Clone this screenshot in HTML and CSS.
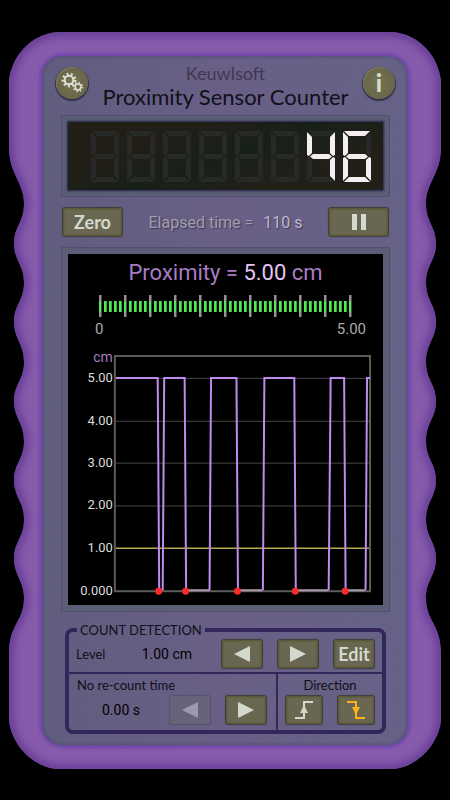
FILE: index.html
```html
<!DOCTYPE html>
<html lang="en">

<head>
  <meta charset="UTF-8">
  <meta name="viewport" content="width=device-width, initial-scale=1.0">
  <title>Proximity Sensor Counter</title>
  <link rel="stylesheet" href="styles.css">
</head>

<body>

  <main class="device">
    <!-- purple rubber case with finger grips -->
    <svg class="case" viewBox="0 0 432 735" preserveAspectRatio="none" aria-hidden="true">
      <defs>
        <path id="caseShape" d="M48 0 H384 C412 3 429 25 432 48 V115 C432 142 417 150 417 171 C417 190 427 194 427 211 C427 228 417 232 417 250 C417 268 427 272 427 289 C427 306 417 311 417 329 C417 347 427 351 427 368 C427 385 417 390 417 408 C417 426 427 430 427 447 C427 464 417 468 417 486 C417 504 427 508 427 525 C427 542 417 547 417 564 C417 588 432 590 432 620 V687 C429 710 410 732 384 735 H48 C22 732 3 710 0 687 V620 C0 590 15 588 15 564 C15 547 5 542 5 525 C5 508 15 504 15 486 C15 468 5 464 5 447 C5 430 15 426 15 408 C15 390 5 385 5 368 C5 351 15 347 15 329 C15 311 5 306 5 289 C5 272 15 268 15 250 C15 232 5 228 5 211 C5 194 15 190 15 171 C15 150 0 142 0 115 V48 C3 25 20 3 48 0 Z"/>
        <clipPath id="caseClip"><use href="#caseShape"/></clipPath>
        <clipPath id="faceClip"><rect x="33" y="24" width="366" height="687" rx="20"/></clipPath>
        <filter id="soft" x="-10%" y="-10%" width="120%" height="120%"><feGaussianBlur stdDeviation="4"/></filter>
        <filter id="softer" x="-10%" y="-10%" width="120%" height="120%"><feGaussianBlur stdDeviation="1.5"/></filter>
        <filter id="grain">
          <feTurbulence type="fractalNoise" baseFrequency="0.5" numOctaves="2" seed="4"/>
          <feColorMatrix values="0 0 0 0 0.1  0 0 0 0 0.1  0 0 0 0 0.15  0.5 0.5 0 0 -0.4"/>
        </filter>
        <linearGradient id="faceFill" x1="0" y1="0" x2="1" y2="0">
          <stop offset="0" stop-color="#625e80"/>
          <stop offset="0.5" stop-color="#6a6088"/>
          <stop offset="1" stop-color="#676388"/>
        </linearGradient>
      </defs>
      <use href="#caseShape" fill="#865bab"/>
      <g clip-path="url(#caseClip)">
        <use href="#caseShape" fill="none" stroke="#5c3090" stroke-width="7" filter="url(#soft)"/>
        <rect x="32" y="23" width="368" height="689" rx="22" fill="none" stroke="#6a40ae" stroke-width="3" filter="url(#softer)"/>
      </g>
      <rect x="33" y="24" width="366" height="687" rx="20" fill="url(#faceFill)"/>
      <g clip-path="url(#faceClip)">
        <rect x="33" y="24" width="366" height="687" filter="url(#grain)" opacity="0.35"/>
        <rect x="33" y="24" width="366" height="687" rx="20" fill="none" stroke="#4c4670" stroke-width="2" filter="url(#softer)"/>
      </g>
    </svg>

    <div class="face">
      <header class="header">
        <button class="round" aria-label="Settings">
          <svg width="24" height="24" viewBox="0 0 24 24" fill="none" stroke="#dde2d8">
            <circle cx="9" cy="9" r="4.3" stroke-width="2"/>
            <circle cx="9" cy="9" r="6.2" stroke-width="2.4" stroke-dasharray="1.9 2.43"/>
            <circle cx="18" cy="16" r="2.9" stroke-width="1.5"/>
            <circle cx="18" cy="16" r="4.4" stroke-width="1.8" stroke-dasharray="1.4 2.05"/>
          </svg>
        </button>
        <div class="titles">
          <p class="brand">Keuwlsoft</p>
          <h1>Proximity Sensor Counter</h1>
        </div>
        <button class="round info" aria-label="Info">i</button>
      </header>

      <section class="frame">
        <div class="counter" id="counter" role="img" aria-label="46"></div>
      </section>

      <section class="controls">
        <button class="key key-wide">Zero</button>
        <p class="elapsed">Elapsed time = <span>110 s</span></p>
        <button class="key key-wide" aria-label="Pause">
          <svg width="14" height="16" viewBox="0 0 14 16" fill="#d3d9cc"><path d="M0 0h5v16H0zM9 0h5v16H9z"/></svg>
        </button>
      </section>

      <section class="frame">
        <div class="screen">
          <h2>Proximity = <strong>5.00</strong> cm</h2>
          <div class="meter">
            <svg id="ticks" viewBox="0 0 253 22" aria-hidden="true"></svg>
            <div class="range"><span>0</span><span>5.00</span></div>
          </div>
          <svg class="chart" viewBox="0 0 316 250">
            <g class="grid">
              <path d="M48 29.500H302M48 72.500H302M48 114.500H302M48 157.500H302"/>
            </g>
            <rect class="plot" x="47" y="7" width="256" height="236"/>
            <path class="level" d="M48 200H302"/>
            <path class="floor" d="M119 242H142M170 242H195M229 242H261M279 242H298"/>
            <polyline class="trace" points="48,29 90,29 91.500,242"/>
            <polyline class="trace" points="95,242 96.500,29 117,29 118.500,242"/>
            <polyline class="trace" points="142,242 143.500,29 169,29 170.500,242"/>
            <polyline class="trace" points="195.500,242 197,29 227,29 228.500,242"/>
            <polyline class="trace" points="261.500,242 263.500,29 277,29 278.500,242"/>
            <polyline class="trace" points="298.500,242 300,29 303,29"/>
            <g class="dots">
              <circle cx="91" cy="243" r="3.500"/>
              <circle cx="118" cy="243" r="3.500"/>
              <circle cx="170" cy="243" r="3.500"/>
              <circle cx="228" cy="243" r="3.500"/>
              <circle cx="278" cy="243" r="3.500"/>
            </g>
            <g class="axis">
              <text class="unit" x="45" y="13">cm</text>
              <text x="45" y="33">5.00</text>
              <text x="45" y="76">4.00</text>
              <text x="45" y="118">3.00</text>
              <text x="45" y="161">2.00</text>
              <text x="45" y="204">1.00</text>
              <text x="45" y="247">0.000</text>
            </g>
          </svg>
        </div>
      </section>

      <fieldset class="detection">
        <legend>COUNT DETECTION</legend>
        <div class="level-row">
          <span class="name">Level</span>
          <span class="value">1.00 cm</span>
          <div class="keys">
            <button class="key" aria-label="Lower level"><svg width="16" height="16" viewBox="0 0 16 16"><path class="arrow" d="M16 0v16L0 8z"/></svg></button>
            <button class="key" aria-label="Raise level"><svg width="16" height="16" viewBox="0 0 16 16"><path class="arrow" d="M0 0v16l16-8z"/></svg></button>
            <button class="key">Edit</button>
          </div>
        </div>
        <div class="bottom-row">
          <div class="recount">
            <span class="name">No re-count time</span>
            <div class="setting">
              <span class="value">0.00 s</span>
              <div class="keys">
                <button class="key" disabled aria-label="Less time"><svg width="16" height="16" viewBox="0 0 16 16"><path class="arrow" d="M16 0v16L0 8z"/></svg></button>
                <button class="key" aria-label="More time"><svg width="16" height="16" viewBox="0 0 16 16"><path class="arrow" d="M0 0v16l16-8z"/></svg></button>
              </div>
            </div>
          </div>
          <div class="direction">
            <span class="name">Direction</span>
            <div class="keys">
              <button class="key key-small" aria-label="Rising edge">
                <svg width="20" height="20" viewBox="0 0 20 20" fill="none" stroke="#d3d9cc" stroke-width="2"><path d="M1 18H10V2H19"/><path d="M10 5L14 13H6Z" fill="#d3d9cc" stroke="none"/></svg>
              </button>
              <button class="key key-small" aria-label="Falling edge">
                <svg width="20" height="20" viewBox="0 0 20 20" fill="none" stroke="#ffb01c" stroke-width="2"><path d="M1 2H10V18H19"/><path d="M6 7H14L10 15Z" fill="#ffb01c" stroke="none"/></svg>
              </button>
            </div>
          </div>
        </div>
      </fieldset>
    </div>
  </main>

  <script>
    // segments that are lit for each number
    var lit = {
      0: 'abcdef', 1: 'bc', 2: 'abged', 3: 'abgcd', 4: 'fgbc',
      5: 'afgcd', 6: 'afgedc', 7: 'abc', 8: 'abcdefg', 9: 'abcdfg'
    };

    function showCount(count) {
      var digits = String(count).padStart(8, ' ').split('');
      document.getElementById('counter').innerHTML = digits.map(function (d) {
        return '<div class="digit">' + 'abcdefg'.split('').map(function (s) {
          var on = lit[d] && lit[d].indexOf(s) > -1;
          return '<i class="seg seg-' + s + (on ? ' on' : '') + '"></i>';
        }).join('') + '</div>';
      }).join('');
    }

    function drawTicks() {
      var out = '';
      for (var i = 0; i <= 50; i++) {
        var x = i * 5;
        if (i % 5 === 0) {
          out += '<rect class="tick-major" x="' + x + '" y="0" width="2.5" height="22"/>';
        }
        out += '<rect class="tick" x="' + x + '" y="6" width="' + (i % 5 ? 2.7 : 2) + '" height="11"/>';
      }
      document.getElementById('ticks').innerHTML = out;
    }

    showCount(46);
    drawTicks();
  </script>

</body>

</html>
```
FILE: styles.css
```css
* {
  box-sizing: border-box;
}

body {
  margin: 0;
  padding: 32px 9px;
  background: #000;
  font-family: Roboto, sans-serif;
}

h1, h2, p {
  margin: 0;
  font-weight: normal;
}

button {
  padding: 0;
  border: 0;
  font-family: Lato, sans-serif;
  cursor: pointer;
}

.device {
  position: relative;
}

.case {
  position: absolute;
  top: 0;
  left: 0;
  width: 100%;
  height: 100%;
}

.face {
  position: relative;
  padding: 30px 51px 35px 52px;
}

.header {
  display: flex;
  justify-content: space-between;
  align-items: flex-start;
  height: 53px;
  margin: 0 -5px;
}

.titles {
  text-align: center;
}

.brand {
  font: 18px/22px Lato, sans-serif;
  color: #40384f;
}

h1 {
  font: 22px/26px Lato, sans-serif;
  white-space: nowrap;
  color: #111018;
}

.round {
  flex: none;
  display: flex;
  align-items: center;
  justify-content: center;
  width: 32px;
  height: 32px;
  margin-top: 5px;
  border-radius: 50%;
  background: radial-gradient(circle, #76744f, #625f48);
  box-shadow: 0 1px 1px 1px #30304a, inset 1px 1px 1px #7c7a5c;
}

.info {
  font-size: 24px;
  font-weight: 900;
  line-height: 32px;
  color: #d3d9cc;
}

/* recessed bezel round the displays */
.frame {
  padding: 6px;
  border: 1px solid #514f6c;
  background: #5c5e78;
}

.counter {
  display: flex;
  justify-content: flex-end;
  gap: 8px;
  height: 68px;
  padding: 9px 12px 0 0;
  background: linear-gradient(160deg, #201e17 30%, #18201a 50%, #211f18 75%);
  box-shadow: 0 0 2px 1px #25264a;
}

.digit {
  display: grid;
  grid-template-columns: 5px 18px 5px;
  grid-template-rows: 5px 18px 5px 18px 5px;
}

.seg {
  background: #272a27;
}

.seg.on {
  background: #f4eef1;
}

.seg-a {
  grid-area: 1 / 1 / 2 / 4;
  clip-path: polygon(1px 0, 27px 0, 22px 100%, 6px 100%);
}

.seg-b {
  grid-area: 1 / 3 / 4 / 4;
  clip-path: polygon(100% 1px, 100% 24px, 3px 25px, 0 22px, 0 6px);
}

.seg-c {
  grid-area: 3 / 3 / 6 / 4;
  clip-path: polygon(100% 27px, 100% 4px, 3px 3px, 0 6px, 0 22px);
}

.seg-d {
  grid-area: 5 / 1 / 6 / 4;
  clip-path: polygon(6px 0, 22px 0, 27px 100%, 1px 100%);
}

.seg-e {
  grid-area: 3 / 1 / 6 / 2;
  clip-path: polygon(0 27px, 0 4px, 2px 3px, 100% 6px, 100% 22px);
}

.seg-f {
  grid-area: 1 / 1 / 4 / 2;
  clip-path: polygon(0 1px, 0 24px, 2px 25px, 100% 22px, 100% 6px);
}

.seg-g {
  grid-area: 3 / 1 / 4 / 4;
  clip-path: polygon(3px 50%, 6px 0, 22px 0, 25px 50%, 22px 100%, 6px 100%);
}

.controls {
  display: flex;
  align-items: center;
  justify-content: space-between;
  height: 50px;
  padding: 0 2px;
}

.elapsed {
  font-size: 16px;
  color: #a19ead;
  text-shadow: 1px 1px 1px #3c3850;
}

.elapsed span {
  margin-left: 6px;
  color: #c0b6cf;
}

.key {
  flex: none;
  display: flex;
  align-items: center;
  justify-content: center;
  width: 40px;
  height: 28px;
  border-radius: 2px;
  background: #696751;
  box-shadow: 0 0 1px 1px #3c3d38, inset 0 0 2px 1px #55542f;
  font-size: 18px;
  font-weight: bold;
  line-height: 28px;
  color: #d3d9cc;
}

.key-wide {
  width: 59px;
}

.key-small {
  width: 36px;
}

.key:disabled {
  background: #67647a;
  box-shadow: 0 0 1px 1px #55516c;
}

.arrow {
  fill: #d3d9cc;
}

.key:disabled .arrow {
  fill: #9c99ae;
}

.screen {
  padding: 6px 0 7px;
  background: #000;
}

h2 {
  font-size: 22px;
  line-height: 26px;
  text-align: center;
  color: #a87cc4;
}

h2 strong {
  font-weight: normal;
  color: #e3c5fa;
}

.meter {
  padding: 9px 31px 0;
}

.meter svg {
  display: block;
  width: 100%;
}

.tick {
  fill: #4eec55;
}

.tick-major {
  fill: #9b8e9b;
}

.range {
  display: flex;
  justify-content: space-between;
  margin: 0 -14px 0 -4px;
  font-size: 15px;
  line-height: 24px;
  color: #aaa;
}

.chart {
  display: block;
  width: 100%;
  margin-top: 8px;
}

.grid {
  stroke: #484848;
}

.plot {
  fill: none;
  stroke: #5c5c5c;
  stroke-width: 2;
}

.level {
  stroke: #b5ab55;
  stroke-width: 1.5;
}

.floor {
  stroke: #a99bab;
  stroke-width: 2;
}

.trace {
  fill: none;
  stroke: #c08af0;
  stroke-width: 2;
}

.dots {
  fill: #fb2a2a;
}

.axis {
  font-size: 13px;
  text-anchor: end;
  fill: #ddd;
}

.axis .unit {
  font-size: 14px;
  fill: #a87cc4;
}

.detection {
  min-width: 0;
  margin: 10px 4px 0;
  padding: 0;
  border: 4px solid #33265a;
  border-radius: 8px;
  color: #100e18;
}

.detection legend {
  margin-left: 8px;
  padding: 0 3px;
  font: 13px/16px Lato, sans-serif;
}

.name {
  font: 13px/16px Lato, sans-serif;
}

.value {
  font-size: 14px;
  color: #000;
}

.keys {
  display: flex;
  gap: 16px;
}

.level-row {
  display: flex;
  align-items: center;
  height: 36px;
  padding: 0 8px 2px 7px;
  border-bottom: 2px solid #33265a;
}

.level-row .value {
  margin: 0 30px 0 auto;
}

.bottom-row {
  display: flex;
  height: 56px;
}

.recount {
  flex: 1;
  padding: 3px 10px 0 8px;
  border-right: 2px solid #33265a;
}

.recount .name,
.direction .name {
  display: block;
}

.setting {
  display: flex;
  align-items: center;
  justify-content: space-between;
  padding-left: 25px;
  margin-top: 3px;
}

.direction {
  padding: 3px 8px 0;
  text-align: center;
}

.direction .keys {
  margin-top: 3px;
}
```
